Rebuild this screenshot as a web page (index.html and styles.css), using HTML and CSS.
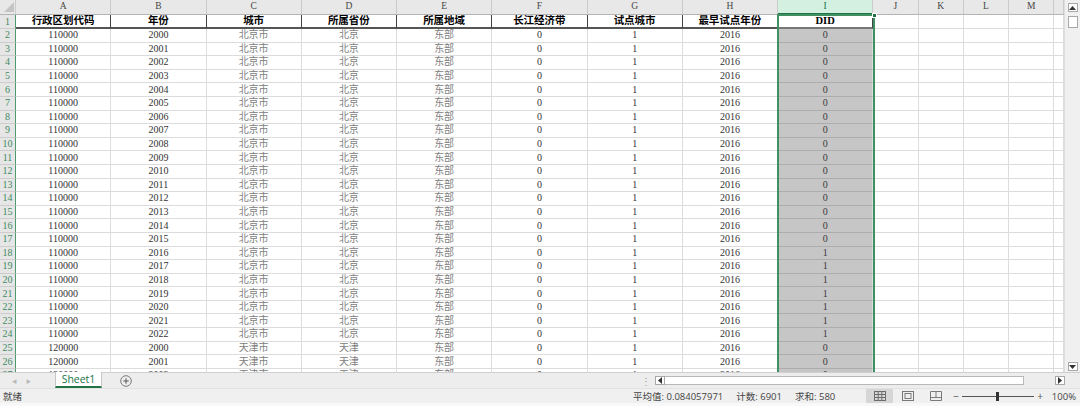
FILE: index.html
```html
<!DOCTYPE html>
<html lang="zh-CN">
<head>
<meta charset="utf-8">
<title>Sheet1</title>
<link rel="stylesheet" href="styles.css">
</head>
<body>
<div class="app">
  <div class="main">
    <div class="sheet">
      <div class="row colhdr"><span class="corner"><svg width="10" height="10" viewBox="0 0 10 10"><polygon points="10,0 10,10 0,10" fill="#c4c4c4"/></svg></span><span>A</span><span>B</span><span>C</span><span>D</span><span>E</span><span>F</span><span>G</span><span>H</span><span class="csel">I</span><span>J</span><span>K</span><span>L</span><span>M</span><span></span></div>
      <div class="row head"><span class="rn">1</span><span>行政区划代码</span><span>年份</span><span>城市</span><span>所属省份</span><span>所属地域</span><span>长江经济带</span><span>试点城市</span><span>最早试点年份</span><span class="did">DID</span><span></span><span></span><span></span><span></span><span></span></div>
      <div class="row"><span class="rn">2</span><span>110000</span><span>2000</span><span class="t">北京市</span><span class="t">北京</span><span class="t">东部</span><span>0</span><span>1</span><span>2016</span><span class="s">0</span><span></span><span></span><span></span><span></span><span></span></div>
      <div class="row"><span class="rn">3</span><span>110000</span><span>2001</span><span class="t">北京市</span><span class="t">北京</span><span class="t">东部</span><span>0</span><span>1</span><span>2016</span><span class="s">0</span><span></span><span></span><span></span><span></span><span></span></div>
      <div class="row"><span class="rn">4</span><span>110000</span><span>2002</span><span class="t">北京市</span><span class="t">北京</span><span class="t">东部</span><span>0</span><span>1</span><span>2016</span><span class="s">0</span><span></span><span></span><span></span><span></span><span></span></div>
      <div class="row"><span class="rn">5</span><span>110000</span><span>2003</span><span class="t">北京市</span><span class="t">北京</span><span class="t">东部</span><span>0</span><span>1</span><span>2016</span><span class="s">0</span><span></span><span></span><span></span><span></span><span></span></div>
      <div class="row"><span class="rn">6</span><span>110000</span><span>2004</span><span class="t">北京市</span><span class="t">北京</span><span class="t">东部</span><span>0</span><span>1</span><span>2016</span><span class="s">0</span><span></span><span></span><span></span><span></span><span></span></div>
      <div class="row"><span class="rn">7</span><span>110000</span><span>2005</span><span class="t">北京市</span><span class="t">北京</span><span class="t">东部</span><span>0</span><span>1</span><span>2016</span><span class="s">0</span><span></span><span></span><span></span><span></span><span></span></div>
      <div class="row"><span class="rn">8</span><span>110000</span><span>2006</span><span class="t">北京市</span><span class="t">北京</span><span class="t">东部</span><span>0</span><span>1</span><span>2016</span><span class="s">0</span><span></span><span></span><span></span><span></span><span></span></div>
      <div class="row"><span class="rn">9</span><span>110000</span><span>2007</span><span class="t">北京市</span><span class="t">北京</span><span class="t">东部</span><span>0</span><span>1</span><span>2016</span><span class="s">0</span><span></span><span></span><span></span><span></span><span></span></div>
      <div class="row"><span class="rn">10</span><span>110000</span><span>2008</span><span class="t">北京市</span><span class="t">北京</span><span class="t">东部</span><span>0</span><span>1</span><span>2016</span><span class="s">0</span><span></span><span></span><span></span><span></span><span></span></div>
      <div class="row"><span class="rn">11</span><span>110000</span><span>2009</span><span class="t">北京市</span><span class="t">北京</span><span class="t">东部</span><span>0</span><span>1</span><span>2016</span><span class="s">0</span><span></span><span></span><span></span><span></span><span></span></div>
      <div class="row"><span class="rn">12</span><span>110000</span><span>2010</span><span class="t">北京市</span><span class="t">北京</span><span class="t">东部</span><span>0</span><span>1</span><span>2016</span><span class="s">0</span><span></span><span></span><span></span><span></span><span></span></div>
      <div class="row"><span class="rn">13</span><span>110000</span><span>2011</span><span class="t">北京市</span><span class="t">北京</span><span class="t">东部</span><span>0</span><span>1</span><span>2016</span><span class="s">0</span><span></span><span></span><span></span><span></span><span></span></div>
      <div class="row"><span class="rn">14</span><span>110000</span><span>2012</span><span class="t">北京市</span><span class="t">北京</span><span class="t">东部</span><span>0</span><span>1</span><span>2016</span><span class="s">0</span><span></span><span></span><span></span><span></span><span></span></div>
      <div class="row"><span class="rn">15</span><span>110000</span><span>2013</span><span class="t">北京市</span><span class="t">北京</span><span class="t">东部</span><span>0</span><span>1</span><span>2016</span><span class="s">0</span><span></span><span></span><span></span><span></span><span></span></div>
      <div class="row"><span class="rn">16</span><span>110000</span><span>2014</span><span class="t">北京市</span><span class="t">北京</span><span class="t">东部</span><span>0</span><span>1</span><span>2016</span><span class="s">0</span><span></span><span></span><span></span><span></span><span></span></div>
      <div class="row"><span class="rn">17</span><span>110000</span><span>2015</span><span class="t">北京市</span><span class="t">北京</span><span class="t">东部</span><span>0</span><span>1</span><span>2016</span><span class="s">0</span><span></span><span></span><span></span><span></span><span></span></div>
      <div class="row"><span class="rn">18</span><span>110000</span><span>2016</span><span class="t">北京市</span><span class="t">北京</span><span class="t">东部</span><span>0</span><span>1</span><span>2016</span><span class="s">1</span><span></span><span></span><span></span><span></span><span></span></div>
      <div class="row"><span class="rn">19</span><span>110000</span><span>2017</span><span class="t">北京市</span><span class="t">北京</span><span class="t">东部</span><span>0</span><span>1</span><span>2016</span><span class="s">1</span><span></span><span></span><span></span><span></span><span></span></div>
      <div class="row"><span class="rn">20</span><span>110000</span><span>2018</span><span class="t">北京市</span><span class="t">北京</span><span class="t">东部</span><span>0</span><span>1</span><span>2016</span><span class="s">1</span><span></span><span></span><span></span><span></span><span></span></div>
      <div class="row"><span class="rn">21</span><span>110000</span><span>2019</span><span class="t">北京市</span><span class="t">北京</span><span class="t">东部</span><span>0</span><span>1</span><span>2016</span><span class="s">1</span><span></span><span></span><span></span><span></span><span></span></div>
      <div class="row"><span class="rn">22</span><span>110000</span><span>2020</span><span class="t">北京市</span><span class="t">北京</span><span class="t">东部</span><span>0</span><span>1</span><span>2016</span><span class="s">1</span><span></span><span></span><span></span><span></span><span></span></div>
      <div class="row"><span class="rn">23</span><span>110000</span><span>2021</span><span class="t">北京市</span><span class="t">北京</span><span class="t">东部</span><span>0</span><span>1</span><span>2016</span><span class="s">1</span><span></span><span></span><span></span><span></span><span></span></div>
      <div class="row"><span class="rn">24</span><span>110000</span><span>2022</span><span class="t">北京市</span><span class="t">北京</span><span class="t">东部</span><span>0</span><span>1</span><span>2016</span><span class="s">1</span><span></span><span></span><span></span><span></span><span></span></div>
      <div class="row"><span class="rn">25</span><span>120000</span><span>2000</span><span class="t">天津市</span><span class="t">天津</span><span class="t">东部</span><span>0</span><span>1</span><span>2016</span><span class="s">0</span><span></span><span></span><span></span><span></span><span></span></div>
      <div class="row"><span class="rn">26</span><span>120000</span><span>2001</span><span class="t">天津市</span><span class="t">天津</span><span class="t">东部</span><span>0</span><span>1</span><span>2016</span><span class="s">0</span><span></span><span></span><span></span><span></span><span></span></div>
      <div class="row"><span class="rn">27</span><span>120000</span><span>2002</span><span class="t">天津市</span><span class="t">天津</span><span class="t">东部</span><span>0</span><span>1</span><span>2016</span><span class="s">0</span><span></span><span></span><span></span><span></span><span></span></div>
      <div class="selbox"><i class="handle"></i></div>
    </div>
    <div class="vscroll">
      <span class="sbtn"><svg width="7" height="4" viewBox="0 0 7 4"><polygon points="0,4 7,4 3.5,0" fill="#333"/></svg></span>
      <span class="vthumb"></span>
      <span class="vgap"></span>
      <span class="sbtn"><svg width="7" height="4" viewBox="0 0 7 4"><polygon points="0,0 7,0 3.5,4" fill="#333"/></svg></span>
    </div>
  </div>
  <div class="tabbar">
    <div class="nav"><span>&#9664;</span><span>&#9654;</span></div>
    <div class="tab">Sheet1</div>
    <div class="add"><svg width="12" height="12" viewBox="0 0 12 12"><circle cx="6" cy="6" r="5.3" fill="none" stroke="#7a7a7a" stroke-width="1"/><path d="M3.3 6h5.4M6 3.3v5.4" stroke="#555" stroke-width="1"/></svg></div>
    <div class="hscroll">
      <span class="split">&#8942;</span>
      <span class="hbtn"><svg width="4" height="7" viewBox="0 0 4 7"><polygon points="4,0 4,7 0,3.5" fill="#333"/></svg></span>
      <span class="htrack"></span>
      <span class="hbtn"><svg width="4" height="7" viewBox="0 0 4 7"><polygon points="0,0 0,7 4,3.5" fill="#333"/></svg></span>
    </div>
  </div>
  <div class="status">
    <span class="ready">就绪</span>
    <div class="stats"><span>平均值: 0.084057971</span><span>计数: 6901</span><span>求和: 580</span></div>
    <div class="views">
      <span class="vbtn on"><svg width="12" height="10" viewBox="0 0 12 10"><rect x="0.5" y="0.5" width="11" height="9" fill="none" stroke="#6d6d6d"/><path d="M4.2 0.5v9M7.8 0.5v9M0.5 3.5h11M0.5 6.5h11" stroke="#6d6d6d"/></svg></span>
      <span class="vbtn"><svg width="12" height="10" viewBox="0 0 12 10"><rect x="0.5" y="0.5" width="11" height="9" fill="none" stroke="#7a7a7a"/><rect x="3" y="2.5" width="6" height="5" fill="none" stroke="#7a7a7a"/></svg></span>
      <span class="vbtn"><svg width="12" height="10" viewBox="0 0 12 10"><path d="M0.5 0.5h11v9h-11zM0.5 6.5h11M6 0.5v6" fill="none" stroke="#7a7a7a"/></svg></span>
    </div>
    <div class="zoom">
      <span class="zm">&#8722;</span>
      <span class="slider"><i class="knob"></i></span>
      <span class="zm">+</span>
      <span class="pct">100%</span>
    </div>
  </div>
</div>
</body>
</html>
```

FILE: styles.css
```css
* { box-sizing: border-box; }
html, body { margin: 0; padding: 0; background: #fff; }
.app {
  width: 1080px;
  height: 406px;
  display: flex;
  flex-direction: column;
  overflow: hidden;
  font-family: "Liberation Serif", "Noto Sans CJK SC", serif;
}
.main { display: flex; height: 372px; }
.sheet {
  position: relative;
  width: 1064px;
  height: 372px;
  overflow: hidden;
}
.row {
  display: grid;
  grid-template-columns: 16px repeat(9, 95.25px) repeat(4, 45.25px) 9.75px;
  height: 13.6px;
}
.row > span {
  display: flex;
  align-items: center;
  justify-content: center;
  border-right: 1px solid #dcdcdc;
  border-bottom: 1px solid #dcdcdc;
  font-size: 10px;
  line-height: 1;
  color: #333;
  white-space: nowrap;
  overflow: hidden;
}
.row > span.t { color: #808080; }
.row > span.rn {
  background: #e6e6e6;
  color: #3f8a62;
  border-right: 1px solid #4c9a6e;
  border-bottom: 1px solid #cdcdcd;
  font-size: 10px;
}
.row > span.s {
  background: #c6c6c6;
  border-bottom-color: #adadad;
  color: #3a3a3a;
}

/* column header */
.colhdr { height: 15px; }
.colhdr > span {
  background: #e8e8e8;
  color: #454545;
  border-right: 1px solid #cacaca;
  border-bottom: 1px solid #b4b4b4;
  font-size: 9.5px;
}
.colhdr > span.corner {
  align-items: flex-end;
  justify-content: flex-end;
  padding: 0 1px 2px 0;
}
.colhdr > span.csel {
  background: #d3f0e0;
  color: #217346;
  border-bottom: 2px solid #217346;
}

/* header row 1 */
.head { height: 14px; }
.head > span {
  color: #000;
  font-weight: bold;
  font-size: 10.5px;
  border-right: 1px solid #444;
  border-bottom: 2px solid #555;
}
.head > span.rn { font-weight: normal; font-size: 10px; color: #3f8a62; border-bottom: 1px solid #cdcdcd; border-right: 1px solid #4c9a6e; }
.head > span.did { background: #fff; border-bottom: 2px solid #777; }
.head > span:nth-child(n+11) { border-right: 1px solid #dcdcdc; border-bottom: 1px solid #dcdcdc; }

/* selection outline over column I */
.selbox {
  position: absolute;
  left: 777px;
  top: 14px;
  width: 97.5px;
  height: 360px;
  border: 2px solid #3f9163;
  border-bottom: none;
  pointer-events: none;
}
.handle {
  position: absolute;
  right: -4px;
  top: -3px;
  width: 5px;
  height: 5px;
  background: #217346;
  border: 1px solid #fff;
}

/* vertical scrollbar */
.vscroll {
  width: 16px;
  height: 372px;
  background: #f0f0f0;
  border-left: 1px solid #dedede;
  display: flex;
  flex-direction: column;
  align-items: center;
  padding: 3px 0 1px;
}
.sbtn {
  width: 10px;
  height: 9px;
  background: #fff;
  border: 1px solid #a8a8a8;
  display: flex;
  align-items: center;
  justify-content: center;
}
.vthumb {
  width: 10px;
  height: 12px;
  margin-top: 4px;
  background: #fff;
  border: 1px solid #a8a8a8;
}
.vgap { flex: 1; }

/* tab bar */
.tabbar {
  height: 16px;
  display: flex;
  align-items: stretch;
  background: #ededed;
  border-top: 1px solid #cfcfcf;
  font-family: "Open Sans", "Noto Sans CJK SC", sans-serif;
}
.nav {
  width: 55px;
  display: flex;
  align-items: center;
  gap: 9px;
  padding-left: 12px;
  font-size: 5px;
  color: #b8b8b8;
}
.tab {
  width: 47px;
  background: #fff;
  color: #217346;
  font-size: 10.5px;
  display: flex;
  align-items: center;
  justify-content: center;
  border-left: 1px solid #c6c6c6;
  border-right: 1px solid #c6c6c6;
  border-bottom: 2px solid #217346;
  margin-top: -1px;
}
.add {
  display: flex;
  align-items: center;
  margin-left: 18px;
}
.hscroll {
  margin-left: auto;
  width: 440px;
  display: flex;
  align-items: center;
  padding-right: 15px;
}
.split { color: #9a9a9a; font-size: 10px; width: 12px; text-align: center; margin-right: 3px; }
.hbtn {
  width: 10px;
  height: 9px;
  background: #fff;
  border: 1px solid #a8a8a8;
  display: flex;
  align-items: center;
  justify-content: center;
}
.htrack {
  width: 359px;
  height: 9px;
  background: #fff;
  border: 1px solid #b8b8b8;
  border-left: none;
  margin-right: 31px;
}

/* status bar */
.status {
  flex: 1;
  display: flex;
  align-items: center;
  background: #f0f0f0;
  border-top: 1px solid #e2e2e2;
  border-bottom: 3px solid #f8f8f8;
  font-family: "Open Sans", "Noto Sans CJK SC", sans-serif;
  font-size: 9.5px;
  color: #444;
}
.ready { padding-left: 3px; }
.stats {
  margin-left: auto;
  width: 233px;
  display: flex;
  gap: 13px;
}
.views { display: flex; gap: 1px; width: 86px; }
.vbtn {
  width: 27px;
  height: 14px;
  display: flex;
  align-items: center;
  justify-content: center;
}
.vbtn.on { background: #d6d6d6; }
.zoom {
  display: flex;
  align-items: center;
  width: 128px;
  padding-right: 4px;
}
.zm { font-size: 10px; color: #555; width: 8px; text-align: center; }
.slider {
  position: relative;
  width: 72px;
  height: 1px;
  background: #555;
  margin: 0 2px;
}
.knob {
  position: absolute;
  left: 34px;
  top: -4px;
  width: 3px;
  height: 9px;
  background: #333;
}
.pct { margin-left: auto; }
```
